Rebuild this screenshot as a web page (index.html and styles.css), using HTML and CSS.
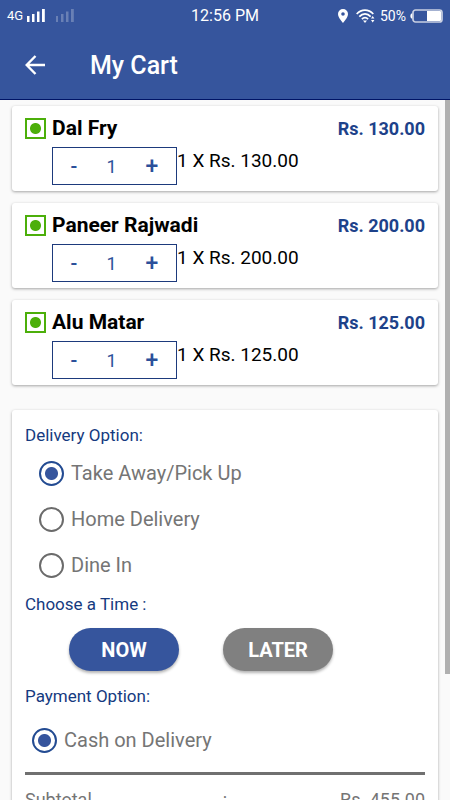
FILE: index.html
```html
<!DOCTYPE html>
<html lang="en">

<head>
    <meta charset="utf-8">
    <meta name="viewport" content="width=device-width, initial-scale=1.0">
    <title>My Cart</title>
    <link rel="stylesheet" href="styles.css">
</head>

<body>

    <header class="top">
        <div class="status">
            <div class="status-left">
                <span class="network">4G</span>
                <svg class="signal" width="18" height="13" viewBox="0 0 18 13" fill="#fff">
                    <path d="M0 7h2.500v6H0zM5 5h2.500v8H5zM10 2.500h2.500v10.500H10zM15 0h2.800v13H15z" />
                </svg>
                <svg class="signal weak" width="18" height="13" viewBox="0 0 18 13" fill="#fff">
                    <path d="M0 7h2v6H0zM5 5h2.500v8H5zM10 2.500h2.500v10.500H10zM15 0h2.800v13H15z" />
                </svg>
            </div>
            <span class="clock">12:56 PM</span>
            <div class="status-right">
                <svg width="10" height="14" viewBox="0 0 10 14" fill="#fff">
                    <path fill-rule="evenodd" d="M5 0a5 5 0 0 0-5 5c0 3.500 5 9 5 9s5-5.500 5-9a5 5 0 0 0-5-5zm0 3.200a1.800 1.800 0 1 1 0 3.600 1.800 1.800 0 0 1 0-3.600z" />
                </svg>
                <svg class="wifi" width="20" height="14" viewBox="0 0 20 14" fill="none" stroke="#fff" stroke-width="1.700">
                    <path d="M.7 5C5.500-.2 12.500-.2 17.300 5M3.300 7.600c3.400-3.700 8-3.700 11.400 0M5.900 10.200c1.900-2 4.300-2 6.200 0" />
                    <path d="M7 11.500h4L9 14zM15 9.500l1.700-2.500 1.700 2.500zM15 11l1.700 2.500 1.700-2.500z" fill="#fff" stroke="none" />
                </svg>
                <span class="percent">50%</span>
                <svg class="battery" width="33" height="14" viewBox="0 0 33 14">
                    <path d="M2.500 4Q.3 4.500.3 7t2.200 3z" fill="#fff" />
                    <rect x="3" y="1" width="29" height="12" rx="2.500" fill="none" stroke="#c9d0e2" stroke-width="1.700" />
                    <path d="M17 2h13q1 0 1 1v8q0 1-1 1H17z" fill="#fff" />
                </svg>
            </div>
        </div>
        <div class="toolbar">
            <button class="back" aria-label="Back">
                <svg width="20" height="20" viewBox="0 0 20 20" fill="none" stroke="#fff" stroke-width="2.400">
                    <path d="M20 10H2M10.500 1L1.700 10l8.800 9" />
                </svg>
            </button>
            <h1>My Cart</h1>
        </div>
    </header>

    <main>
        <section class="items">
            <article class="card item">
                <span class="veg"></span>
                <h2>Dal Fry</h2>
                <p class="total">Rs. 130.00</p>
                <div class="line">
                    <div class="stepper">
                        <button aria-label="Less Dal Fry">-</button>
                        <span class="amount">1</span>
                        <button class="plus" aria-label="More Dal Fry">+</button>
                    </div>
                    <p class="price">1 X Rs. 130.00</p>
                </div>
            </article>
            <article class="card item">
                <span class="veg"></span>
                <h2>Paneer Rajwadi</h2>
                <p class="total">Rs. 200.00</p>
                <div class="line">
                    <div class="stepper">
                        <button aria-label="Less Paneer Rajwadi">-</button>
                        <span class="amount">1</span>
                        <button class="plus" aria-label="More Paneer Rajwadi">+</button>
                    </div>
                    <p class="price">1 X Rs. 200.00</p>
                </div>
            </article>
            <article class="card item">
                <span class="veg"></span>
                <h2>Alu Matar</h2>
                <p class="total">Rs. 125.00</p>
                <div class="line">
                    <div class="stepper">
                        <button aria-label="Less Alu Matar">-</button>
                        <span class="amount">1</span>
                        <button class="plus" aria-label="More Alu Matar">+</button>
                    </div>
                    <p class="price">1 X Rs. 125.00</p>
                </div>
            </article>
        </section>

        <form class="card order">
            <fieldset>
                <legend>Delivery Option:</legend>
                <div class="options">
                    <label><input type="radio" name="delivery" value="pickup" checked>Take Away/Pick Up</label>
                    <label><input type="radio" name="delivery" value="home">Home Delivery</label>
                    <label><input type="radio" name="delivery" value="dinein">Dine In</label>
                </div>
            </fieldset>
            <fieldset>
                <legend>Choose a Time :</legend>
                <div class="times">
                    <button type="button" class="time chosen">NOW</button>
                    <button type="button" class="time">LATER</button>
                </div>
            </fieldset>
            <fieldset>
                <legend>Payment Option:</legend>
                <div class="options payment">
                    <label><input type="radio" name="payment" value="cash" checked>Cash on Delivery</label>
                </div>
            </fieldset>
            <div class="subtotal">
                <span>Subtotal</span>
                <span>:</span>
                <span class="sum">Rs. 455.00</span>
            </div>
        </form>
        <div class="scrollbar"></div>
    </main>

</body>

</html>
```

FILE: styles.css
```css
* {
    box-sizing: border-box;
}

body {
    margin: 0;
    height: 100vh;
    display: flex;
    flex-direction: column;
    overflow: hidden;
    background-color: #fafafa;
    color: #000;
    font-family: Roboto, "Liberation Sans", sans-serif;
}

h1, h2, p {
    margin: 0;
}

button {
    margin: 0;
    padding: 0;
    border: none;
    background: none;
    font-family: inherit;
    cursor: pointer;
}

svg {
    display: block;
}

/* top */

.top {
    flex: none;
    background-color: #36559d;
    border-bottom: 1px solid #001466;
    color: #fff;
}

.status {
    height: 31px;
    padding: 0 7px;
    display: grid;
    grid-template-columns: 1fr auto 1fr;
    align-items: center;
}

.status-left, .status-right {
    display: flex;
    align-items: center;
}

.status-right {
    justify-content: flex-end;
}

.network {
    font-size: 13px;
    margin-right: 4px;
}

.weak {
    margin-left: 11px;
    opacity: .25;
}

.clock {
    font-size: 16px;
}

.wifi {
    margin-left: 8px;
}

.percent {
    font-size: 14px;
    margin: 0 4px;
}

.toolbar {
    height: 68px;
    padding: 0 25px;
    display: flex;
    align-items: center;
    gap: 45px;
}

.toolbar h1 {
    font-size: 25px;
    font-weight: 500;
}

/* cart */

main {
    position: relative;
    flex: 1;
    min-height: 0;
    padding: 6px 12px 0;
    overflow: hidden;
}

.scrollbar {
    position: absolute;
    top: 0;
    right: 0;
    width: 5px;
    height: 82%;
    background-color: #b0b0b0;
}

.card {
    background-color: #fff;
    border-radius: 3px;
    box-shadow: 0 1px 3px rgba(0, 0, 0, .35);
}

.items {
    display: grid;
    gap: 12px;
}

.item {
    display: grid;
    grid-template-columns: 21px 1fr auto;
    column-gap: 6px;
    align-items: center;
    padding: 8px 13px 6px;
}

.item h2 {
    font-size: 21px;
    line-height: 28px;
    font-weight: 700;
}

.veg {
    width: 21px;
    height: 21px;
    border: 2px solid #4caf0a;
    background: radial-gradient(circle, #4caf0a 5px, #fff 6px);
}

.total {
    color: #1d428a;
    font-size: 18px;
    font-weight: 700;
}

.line {
    grid-column: 2 / 4;
    display: flex;
    margin-top: 5px;
}

.price {
    font-size: 19px;
    line-height: 27px;
}

.stepper {
    width: 125px;
    height: 38px;
    border: 1px solid #1d3a7c;
    display: grid;
    grid-template-columns: 42px 1fr 48px;
    align-items: center;
    color: #2b509a;
    text-align: center;
}

.stepper button {
    height: 36px;
    color: inherit;
    font-size: 20px;
    font-weight: 500;
}

.stepper .plus {
    font-size: 23px;
}

.amount {
    font-size: 18px;
}

/* order */

.order {
    margin-top: 25px;
    padding: 15px 13px;
}

fieldset {
    margin: 0;
    padding: 0;
    border: none;
    min-width: 0;
}

legend {
    padding: 0;
    color: #153a80;
    font-size: 17px;
    line-height: 20px;
}

.options {
    padding: 5px 14px 6px;
}

.options label {
    display: flex;
    align-items: center;
    gap: 7px;
    height: 46px;
    color: #757575;
    font-size: 20px;
}

.options input {
    appearance: none;
    flex: none;
    width: 25px;
    height: 25px;
    margin: 0;
    border: 2px solid #6b6b6b;
    border-radius: 50%;
}

.options input:checked {
    border-color: #234b92;
    background: radial-gradient(circle, #36559d 6px, #fff 7px);
}

.times {
    display: flex;
    gap: 44px;
    padding: 14px 44px 15px;
}

.time {
    width: 110px;
    height: 43px;
    border-radius: 22px;
    background-color: #808080;
    box-shadow: 0 2px 3px rgba(0, 0, 0, .3);
    color: #fff;
    font-size: 20px;
    font-weight: 700;
}

.chosen {
    background-color: #36559d;
}

.payment {
    padding: 11px 7px 9px;
}

.subtotal {
    border-top: 3px solid #707070;
    padding-top: 14px;
    display: grid;
    grid-template-columns: 1fr auto 1fr;
    color: #757575;
    font-size: 18px;
}

.sum {
    text-align: right;
}
```
